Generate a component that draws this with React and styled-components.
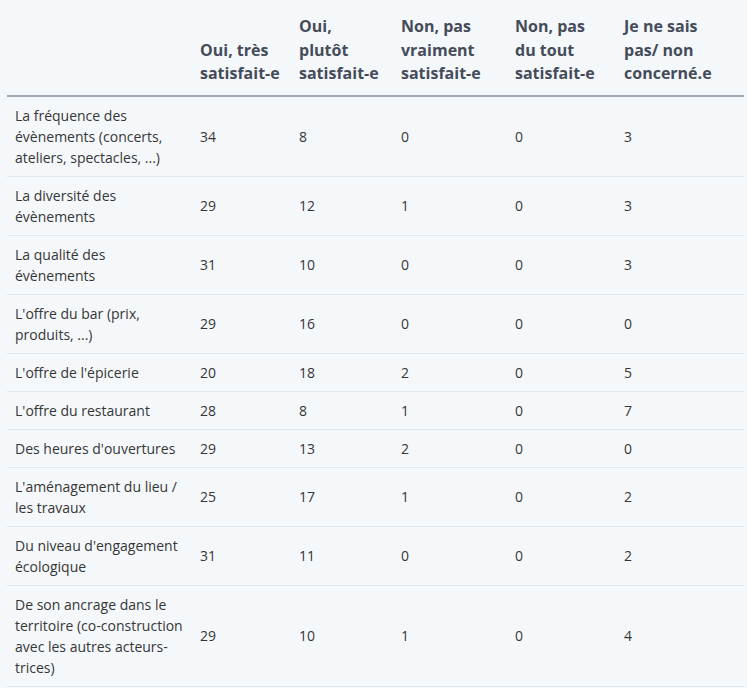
import React from 'react'
import styled, { createGlobalStyle } from 'styled-components'

const columns = [
  'Oui, très satisfait-e',
  'Oui, plutôt satisfait-e',
  'Non, pas vraiment satisfait-e',
  'Non, pas du tout satisfait-e',
  'Je ne sais pas/ non concerné.e',
]

const rows = [
  ['La fréquence des évènements (concerts, ateliers, spectacles, ...)', 34, 8, 0, 0, 3],
  ['La diversité des évènements', 29, 12, 1, 0, 3],
  ['La qualité des évènements', 31, 10, 0, 0, 3],
  ["L'offre du bar (prix, produits, ...)", 29, 16, 0, 0, 0],
  ["L'offre de l'épicerie", 20, 18, 2, 0, 5],
  ["L'offre du restaurant", 28, 8, 1, 0, 7],
  ["Des heures d'ouvertures", 29, 13, 2, 0, 0],
  ["L'aménagement du lieu / les travaux", 25, 17, 1, 0, 2],
  ["Du niveau d'engagement écologique", 31, 11, 0, 0, 2],
  ['De son ancrage dans le territoire (co-construction avec les autres acteurs-trices)', 29, 10, 1, 0, 4],
]

const widths = [185, 99, 102, 114, 109, 128]

const GlobalStyle = createGlobalStyle`
  html, body {
    margin: 0;
    background: #f5f8fb;
  }
  body {
    font-family: "Open Sans", "Liberation Sans", sans-serif;
  }
`

const Page = styled.div`
  padding: 0 3px 0 7px;
`

const Table = styled.table`
  border-collapse: collapse;
  table-layout: fixed;
  width: 737px;
  font-size: 14px;
  color: #363636;
`

const HeadCell = styled.th`
  text-align: left;
  vertical-align: bottom;
  font-weight: 700;
  font-size: 16px;
  line-height: 23.5px;
  color: #454c59;
  padding: 15px 10px 9px 8px;
  border-bottom: 2px solid #a3a9b3;
`

const Cell = styled.td`
  vertical-align: middle;
  line-height: 21px;
  padding: 8px;
  border-bottom: 1px solid #e2e7ee;
`

const LabelCell = styled(Cell)`
  padding-right: 6px;
`

const App = () => (
  <React.Fragment>
    <GlobalStyle />
    <Page>
      <Table>
        <colgroup>
          {widths.map((w, i) => <col key={i} style={{ width: w }} />)}
        </colgroup>
        <thead>
          <tr>
            <HeadCell />
            {columns.map(c => <HeadCell key={c}>{c}</HeadCell>)}
          </tr>
        </thead>
        <tbody>
          {rows.map(r => (
            <tr key={r[0]}>
              <LabelCell>{r[0]}</LabelCell>
              {r.slice(1).map((v, i) => <Cell key={i}>{v}</Cell>)}
            </tr>
          ))}
        </tbody>
      </Table>
    </Page>
  </React.Fragment>
)

export default App
